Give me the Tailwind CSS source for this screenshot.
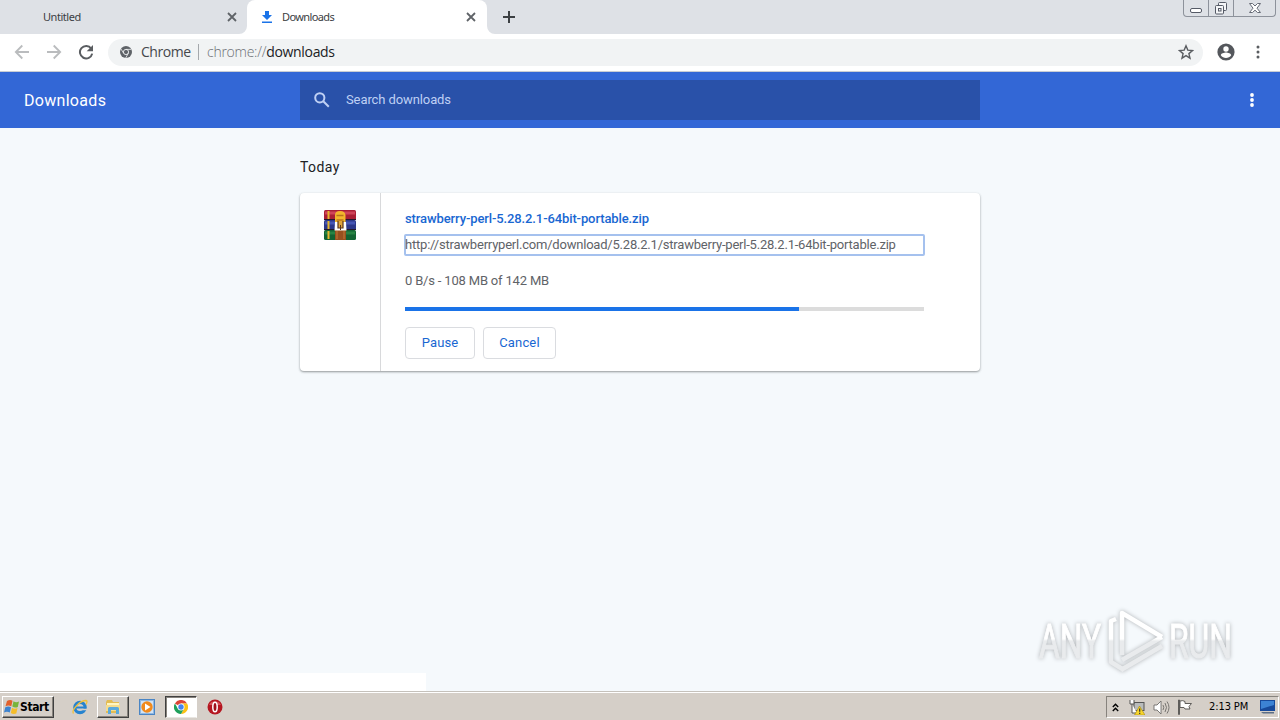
<!DOCTYPE html>
<html lang="en">
<head>
  <meta charset="UTF-8" />
  <title>Downloads</title>
  <meta name="viewport" content="width=device-width, initial-scale=1" />
  <script src="https://cdn.jsdelivr.net/npm/@tailwindcss/browser@4"></script>
</head>
<body class="w-[1280px] h-[720px] overflow-hidden flex flex-col bg-[#f5f9fc] font-[Roboto,sans-serif]">

  <!-- Tab strip -->
  <div class="h-[34px] shrink-0 flex bg-[#dee1e6] text-[11px] text-[#3c4043] font-['Noto_Sans',sans-serif]">
    <div class="w-[247px] flex items-center pl-[43px] pr-[10px] justify-between">
      <span class="tracking-[-0.45px]">Untitled</span>
      <svg class="size-[10px]" viewBox="0 0 10 10" stroke="#5f6368" stroke-width="1.8"><path d="M1 1l8 8M9 1l-8 8" /></svg>
    </div>
    <div class="relative w-[240px] flex items-center pl-[14px] pr-[11px] bg-white rounded-t-lg">
      <svg class="absolute -left-2 bottom-0 size-2" viewBox="0 0 8 8" fill="#fff"><path d="M8 0v8H0a8 8 0 0 0 8-8z" /></svg>
      <svg class="absolute -right-2 bottom-0 size-2" viewBox="0 0 8 8" fill="#fff"><path d="M0 0v8h8a8 8 0 0 1-8-8z" /></svg>
      <svg class="w-3 h-[14px]" viewBox="0 0 12 14" fill="#1a73e8"><path d="M4 1h4v4h3L6 10 1 5h3zM1 11.5h10v1.6H1z" /></svg>
      <span class="ml-[9px] mr-auto tracking-[-0.6px]">Downloads</span>
      <svg class="size-[10px]" viewBox="0 0 10 10" stroke="#5f6368" stroke-width="1.8"><path d="M1 1l8 8M9 1l-8 8" /></svg>
    </div>
    <div class="pl-4 flex items-center">
      <svg class="size-3" viewBox="0 0 12 12" stroke="#3c4043" stroke-width="2"><path d="M6 0v12M0 6h12" /></svg>
    </div>
    <!-- Window buttons -->
    <div class="ml-auto mr-1 h-[17px] w-[93px] flex border border-t-0 border-[#8d929b] rounded-b-[4px]">
      <div class="w-[25px] flex justify-center border-r border-[#8d929b]">
        <svg class="w-3 h-4" viewBox="0 0 12 16" fill="#fff" stroke="#555a66"><rect x=".5" y="8.500" width="11" height="4" rx="1.500" /></svg>
      </div>
      <div class="w-[25px] flex justify-center border-r border-[#8d929b]">
        <svg class="w-[14px] h-4" viewBox="0 0 14 16" fill="#f4f5f7" stroke="#555a66"><rect x="4.500" y="2.500" width="8" height="8" rx="1" /><rect x="1.500" y="5.500" width="8" height="8.500" rx="1" /><rect x="4.500" y="8.500" width="2.500" height="2.500" /></svg>
      </div>
      <div class="grow flex justify-center">
        <svg class="w-3 h-4" viewBox="0 0 12 16" fill="#fff" stroke="#666b76"><path d="M.5 3.500h3L6 6l2.500-2.500h3L8 8.200l3.500 4.300h-3L6 10.200 3.500 12.500h-3L4 8.200z" /></svg>
      </div>
    </div>
  </div>

  <!-- Toolbar -->
  <div class="h-[38px] shrink-0 flex items-center bg-white border-b border-[#c9cdd4] pb-px">
    <svg class="ml-[14px] size-4" viewBox="0 0 16 16" fill="none" stroke="#babcbe" stroke-width="1.800"><path d="M15 8H2M8.300 1.500L1.800 8l6.500 6.500" /></svg>
    <svg class="ml-4 size-4" viewBox="0 0 16 16" fill="none" stroke="#babcbe" stroke-width="1.800"><path d="M1 8h13M7.700 1.500L14.200 8l-6.500 6.500" /></svg>
    <svg class="ml-4 size-4" viewBox="0 0 16 16"><path d="M13.200 4.600A6.200 6.200 0 1 0 14.200 9.600" fill="none" stroke="#5a5d61" stroke-width="2" /><path d="M15 1v6.300H8.700z" fill="#5a5d61" /></svg>
    <div class="ml-[14px] w-[1095px] h-[27px] rounded-full bg-[#f1f3f4] flex items-center pl-3 text-[14px] font-light font-['Open_Sans',sans-serif]">
      <svg class="size-3" viewBox="0 0 12 12"><circle cx="6" cy="6" r="6" fill="#5f6368" /><circle cx="6" cy="6" r="2.600" fill="none" stroke="#f1f3f4" stroke-width=".9" /><path d="M6 3.400h5.200M3.700 7.300L1 3M8.300 7.300L5.700 12" stroke="#f1f3f4" stroke-width=".8" /></svg>
      <span class="ml-[9px] w-[49px] pb-0.5 tracking-[-0.45px] text-[#45484c] font-normal">Chrome</span>
      <div class="ml-[8px] w-px h-4 bg-[#a5a8ac]"></div>
      <span class="ml-[8px] pb-0.5 tracking-[-0.26px] text-[#6c7075]">chrome://<span class="text-[#202124] font-normal tracking-[-0.32px]">downloads</span></span>
      <svg class="ml-auto mr-[9px] size-4" viewBox="0 0 16 16" fill="none" stroke="#5a5d61" stroke-width="1.400"><path d="M8 1.800l1.800 4.300 4.700.4-3.600 3.100 1.100 4.600L8 11.700l-4 2.500 1.100-4.600L1.500 6.500l4.700-.4z" /></svg>
    </div>
    <svg class="ml-[14px] size-[18px]" viewBox="0 0 18 18"><circle cx="9" cy="9" r="8.600" fill="#54575c" /><circle cx="9" cy="6" r="2.700" fill="#fff" /><path d="M3.800 12.300c0-2 3.500-2.900 5.200-2.900s5.200.9 5.200 2.900C13 14 11 15 9 15s-4-1-5.200-2.700z" fill="#fff" /></svg>
    <svg class="ml-[21px] w-1 h-[14px]" viewBox="0 0 4 14" fill="#5a5d61"><circle cx="2" cy="2" r="1.500" /><circle cx="2" cy="7" r="1.500" /><circle cx="2" cy="12" r="1.500" /></svg>
  </div>

  <!-- Page header -->
  <header class="h-14 shrink-0 flex items-center bg-[#3367d6] text-white">
    <h1 class="w-[300px] pl-6 pt-0.5 text-[16px] tracking-[0.3px]">Downloads</h1>
    <div class="w-[680px] h-10 flex items-center bg-[#2951a9] pl-[14px] text-[13px] text-[#bfd0f4]">
      <svg class="size-4" viewBox="0 0 16 16" fill="none" stroke="#bfd0f4" stroke-width="2"><circle cx="5.800" cy="5.800" r="4.600" /><path d="M9.300 9.300l5.500 5.500" /></svg>
      <span class="ml-4 tracking-[-0.1px]">Search downloads</span>
    </div>
    <svg class="ml-auto mr-[26px] w-1 h-[14px]" viewBox="0 0 4 14" fill="#fff"><circle cx="2" cy="2" r="1.900" /><circle cx="2" cy="7" r="1.900" /><circle cx="2" cy="12" r="1.900" /></svg>
  </header>

  <main class="grow flex flex-col relative">
    <div class="w-[680px] mx-auto">
      <h2 class="mt-7 text-[14px] leading-[22px] tracking-[0.4px] text-[#202124]">Today</h2>
      <div class="mt-[15px] h-[178px] flex bg-white rounded-[4px] shadow-[0_1px_2px_rgba(60,64,67,0.4),0_1px_3px_rgba(60,64,67,0.18)] text-[13px]">
        <div class="w-[81px] border-r border-[#d8d9db] pt-4 pl-6">
          <!-- Stack of three books held by a belt -->
          <svg class="w-8 h-8" viewBox="0 0 32 32">
            <rect x="0" y="1" width="32" height="10" rx="1.500" fill="#a91f35" /><path d="M1 4h30" stroke="#cf4459" stroke-width="3" />
            <rect x="0" y="11" width="32" height="10" rx="1.500" fill="#2c3789" /><path d="M1 14h30" stroke="#4656b4" stroke-width="3" />
            <rect x="0" y="21" width="32" height="10" rx="1.500" fill="#126332" /><path d="M1 24h30" stroke="#278343" stroke-width="3" />
            <path d="M0 10.500h32M0 20.500h32" stroke="#25172b" />
            <path d="M4.500 2v8M4.500 12v8M4.500 22v8" stroke="#e5b52c" stroke-width="2" />
            <rect x="11" y="21" width="11" height="10" fill="#97501f" /><path d="M13 22v8M20 22v8" stroke="#c37a38" />
            <path d="M11 15V6q0-4 5-4t5.500 4v9z" fill="#f2b62c" /><path d="M12.500 6.500h7M12.500 11h7" stroke="#b8741d" stroke-width="1.500" />
            <path d="M11 13h3v5h5v-5h3l.5 8.500h-12z" fill="#fff" /><path d="M14 12v7h5v-7" fill="#e0a43c" stroke="#5a341c" stroke-width="1.200" /><path d="M16.500 16v5" stroke="#5a341c" />
          </svg>
        </div>
        <div class="w-[543px] pl-6 pt-[17px] flex flex-col text-[#5f6368]">
          <a class="h-[18px] leading-[18px] font-medium tracking-[-0.11px] text-[#1967d2] whitespace-nowrap">strawberry-perl-5.28.2.1-64bit-portable.zip</a>
          <a class="mt-[6px] -ml-px h-[22px] leading-[19px] w-[521px] border-2 border-[#a5c1ee] rounded-[2px] tracking-[-0.21px] whitespace-nowrap"><span class="block -mt-px -ml-px">http://strawberryperl.com/download/5.28.2.1/strawberry-perl-5.28.2.1-64bit-portable.zip</span></a>
          <div class="mt-[15px] leading-5 tracking-[-0.18px]">0 B/s - 108 MB of 142 MB</div>
          <div class="mt-4 h-1 bg-[#dcdcdc]"><div class="h-full bg-[#1a73e8]" style="width: 76%"></div></div>
          <div class="mt-4 flex gap-2 text-[#1967d2] tracking-[0.15px]">
            <button class="w-[70px] h-8 border border-[#dadce0] rounded-[4px]">Pause</button>
            <button class="w-[73px] h-8 border border-[#dadce0] rounded-[4px]">Cancel</button>
          </div>
        </div>
      </div>
    </div>
    <div class="mt-auto w-[426px] h-[18px] bg-white"></div>

    <!-- Watermark -->
    <svg class="absolute left-[1030px] top-[473px] w-[220px] h-[76px] drop-shadow-[0_0_2px_#aeb1b4]" viewBox="0 0 220 76">
      <defs><linearGradient id="fade" gradientUnits="userSpaceOnUse" x1="0" y1="10" x2="0" y2="68"><stop offset=".48" stop-color="#fff" /><stop offset=".52" stop-color="#e9ebed" /></linearGradient></defs>
      <g fill="url(#fade)" stroke="url(#fade)" font-family="Roboto, sans-serif" font-size="49">
        <text x="9" y="57" textLength="62" lengthAdjust="spacingAndGlyphs">ANY</text>
        <text x="139" y="57" textLength="63" lengthAdjust="spacingAndGlyphs">RUN</text>
      </g>
      <g fill="none" stroke="url(#fade)" stroke-width="4.500" stroke-linejoin="round">
        <path d="M92 12V54M92 52V12l40 24" /><path d="M92 59l40-23" /><path d="M86 18l-5 2v41l13 8" /><path d="M91 69l41-24" />
      </g>
    </svg>
  </main>

  <!-- Taskbar -->
  <footer class="h-[29px] shrink-0 flex items-center pt-0.5 bg-[#d5cfc8] border-t border-[#c5c1bb] shadow-[inset_0_1px_0_#fff] font-['DejaVu_Sans_Condensed','DejaVu_Sans',sans-serif] text-[11px] text-black">
    <div class="ml-[2px] w-[52px] h-[22px] flex items-center border border-t-white border-l-white border-r-[#404040] border-b-[#404040] shadow-[inset_-1px_-1px_0_#87837d]">
      <svg class="ml-px w-4 h-4" viewBox="0 0 16 16"><path d="M3 2q3-2 5.500-.3L7.300 7.200Q4.500 5.800 1.500 7.200z" fill="#e2602b" /><path d="M9.500 2.200Q12 4 15 2.500L13.800 8Q11 9.300 8.300 7.600z" fill="#78b43a" /><path d="M1.300 8.300q3-1.500 5.700 0L5.800 13.500Q3 12 0 13.500z" fill="#3d83cf" /><path d="M8 8.800Q10.600 10.500 13.500 9L12.300 14.500q-3 1.200-5.500-.5z" fill="#f5bd29" /></svg>
      <span class="font-bold tracking-[-0.4px] text-[12px]">Start</span>
    </div>
    <svg class="ml-[18px] size-4" viewBox="0 0 16 16" fill="none"><circle cx="8" cy="8.500" r="5.200" stroke="#2683cf" stroke-width="3.200" /><path d="M4 8.500h10" stroke="#2683cf" stroke-width="2" /><path d="M10.500 10.500h5" stroke="#d5cfc8" stroke-width="1.500" /><path d="M1.500 14.500C-1 11 8 1.500 14 1.500q2 .3 0 4" stroke="#efc03c" stroke-width="1.300" /></svg>
    <div class="ml-[9px] w-8 h-[22px] flex items-center justify-center border border-t-white border-l-white border-r-[#404040] border-b-[#404040] shadow-[inset_-1px_-1px_0_#87837d]">
      <svg class="size-4" viewBox="0 0 16 16"><path d="M1 3l1-2h5l1 2h6v11H1z" fill="#e3bc53" /><path d="M2 4h12v3H2z" fill="#fff5bf" /><path d="M1 6h14v6H1z" fill="#f5dc8d" /><path d="M3 15V9.500q0-1.500 1.500-1.500h8q1.500 0 1.500 1.500V15h-3v-4H6v4z" fill="#5aa9dc" /></svg>
    </div>
    <svg class="ml-[10px] size-4" viewBox="0 0 16 16"><rect x=".5" y=".5" width="15" height="15" fill="#8fb8e2" stroke="#4a85c4" /><rect x="2" y="2" width="12" height="12" fill="#d1e3f5" /><circle cx="8" cy="8" r="5.700" fill="#f18a1c" /><path d="M6 4.500v7L11.500 8z" fill="#fff" /></svg>
    <div class="ml-[10px] w-8 h-[22px] flex items-center justify-center bg-white border border-t-[#404040] border-l-[#404040] border-r-white border-b-[#e8e5e1] shadow-[inset_1px_1px_0_#87837d]">
      <svg class="size-[14px]" viewBox="0 0 14 14"><path d="M7 7L.9 3.500A7 7 0 0 1 13.100 3.500H7z" fill="#dc4437" /><path d="M13.100 3.500A7 7 0 0 1 7 14l3-5.200L7 3.500z" fill="#fbc116" /><path d="M.9 3.500A7 7 0 0 0 7 14l3-5.200-6 0z" fill="#1fa05c" /><circle cx="7" cy="7" r="3.500" fill="#fff" /><circle cx="7" cy="7" r="2.700" fill="#4484f0" /></svg>
    </div>
    <svg class="ml-[10px] size-4" viewBox="0 0 16 16"><circle cx="8" cy="8" r="7.500" fill="#b51620" /><path d="M2 6a6.300 5 0 0 1 12 0" fill="#d65358" /><ellipse cx="8" cy="8" rx="2.200" ry="4.800" fill="#a10f19" stroke="#fff" stroke-width="1.500" /></svg>

    <!-- Tray -->
    <div class="ml-auto mr-[1px] w-[173px] h-[22px] flex items-center border border-t-[#87837d] border-l-[#87837d] border-r-white border-b-white">
      <svg class="ml-[5px] w-[7px] h-[9px]" viewBox="0 0 7 9" fill="none" stroke="#000" stroke-width="1.400"><path d="M.8 4l2.700-2.700L6.200 4M.8 8l2.700-2.700L6.200 8" /></svg>
      <svg class="ml-[10px] size-4" viewBox="0 0 16 16"><rect x="5" y="3.500" width="10" height="8" fill="#b9bcbc" stroke="#555" /><path d="M1 1v4h4V1M3 5v9h5" fill="#fff" stroke="#555" /><path d="M10.500 7L16 16H5.500z" fill="#f7d52b" stroke="#a78a13" stroke-width=".6" /><path d="M10.700 9.500v3.300M10.700 13.800V15" stroke="#333" stroke-width="1.200" /></svg>
      <svg class="ml-2 size-[17px]" viewBox="0 0 17 17" fill="#fff" stroke="#6e6c69" stroke-width=".9"><path d="M1 6h3l4-4v13l-4-4H1z" /><path d="M10 6q1.500 2.500 0 5M12 4q3 4.500 0 9M14 2.500q4 6 0 12" fill="none" /></svg>
      <svg class="ml-[7px] size-4" viewBox="0 0 16 16" fill="#fff" stroke="#5f5d5a"><path d="M1.500 1v14.500h1V1zM3 2q3-1 5 .5v2h6.500l-2.500 3 1 2.500H8L7 8.500H3z" /></svg>
      <span class="ml-4 tracking-[-0.1px] whitespace-nowrap">2:13 PM</span>
      <svg class="ml-auto mr-[3px] w-[15px] h-[14px]" viewBox="0 0 15 14"><rect width="15" height="11" fill="#174a9b" /><path d="M1 1h13v4L1 9z" fill="#3c83d4" /><path d="M1 12h13v1.500H3z" fill="#5c6e86" /></svg>
    </div>
  </footer>
</body>
</html>
